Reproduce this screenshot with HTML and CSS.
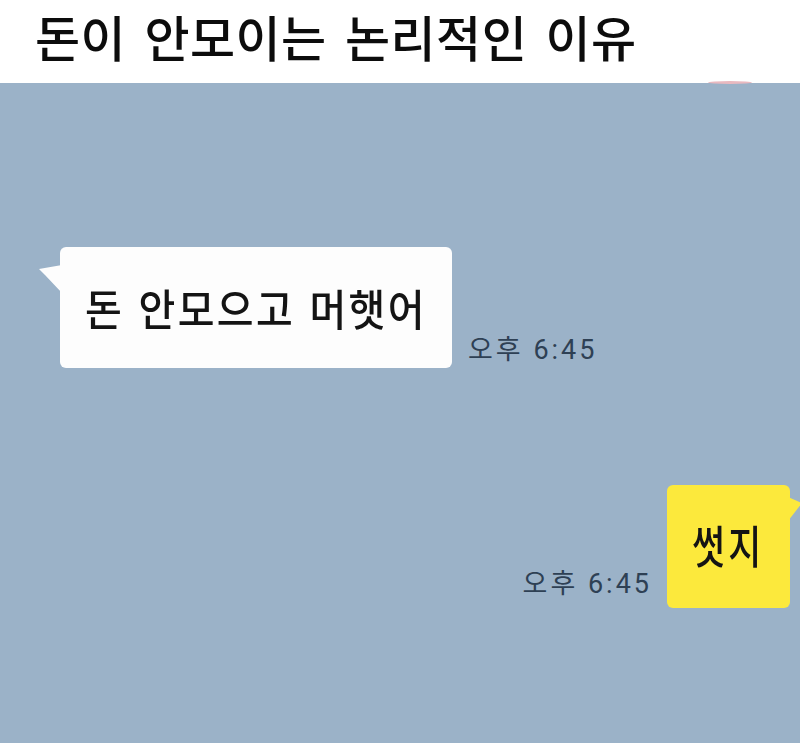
FILE: index.html
```html
<!DOCTYPE html>
<html lang="ko">
<head>
<meta charset="utf-8">
<title>돈이 안모이는 논리적인 이유</title>
<link rel="stylesheet" href="styles.css">
</head>
<body>
  <header class="title-bar">
    <h1 class="title">돈이 안모이는 논리적인 이유</h1>
    <span class="edge-mark"></span>
  </header>
  <main class="chat">
    <div class="row row-in">
      <div class="bubble bubble-in">
        <span class="squeeze msg">돈 안모으고 머햇어</span>
      </div>
      <span class="time">오후 6:45</span>
    </div>
    <div class="row row-out">
      <span class="time">오후 6:45</span>
      <div class="bubble bubble-out">
        <span class="squeeze msg-short">썻지</span>
      </div>
    </div>
  </main>
</body>
</html>
```

FILE: styles.css
```css
* { box-sizing: border-box; }

html, body {
  margin: 0;
  padding: 0;
}

body {
  width: 800px;
  height: 743px;
  overflow: hidden;
  background: #9bb2c8;
  font-family: "Noto Sans CJK KR", "Noto Sans", sans-serif;
  color: #111;
}

.title-bar {
  position: relative;
  height: 83px;
  background: #ffffff;
  padding: 0 0 0 35px;
}

.title {
  margin: 0;
  font-size: 49px;
  font-weight: 500;
  line-height: 1.45;
  letter-spacing: 0.5px;
  word-spacing: 4px;
  white-space: nowrap;
  color: #0c0c0c;
}

/* faint pink smear sitting on the header edge */
.edge-mark {
  position: absolute;
  left: 708px;
  bottom: -1px;
  width: 44px;
  height: 3px;
  border-radius: 50%;
  background: #e9b9c0;
  filter: blur(0.6px);
}

.chat {
  display: flex;
  flex-direction: column;
  padding-top: 164px;
}

.row {
  display: flex;
  align-items: flex-end;
}

.row-in {
  padding-left: 60px;
  gap: 16px;
}

.row-out {
  margin-top: 117px;
  justify-content: flex-end;
  padding-right: 10px;
  gap: 15px;
}

.bubble {
  position: relative;
  border-radius: 6px;
  display: flex;
  align-items: center;
}

.bubble-in {
  width: 392px;
  height: 121px;
  background: #fdfdfd;
  padding-left: 25px;
}

.bubble-in::before {
  content: "";
  position: absolute;
  left: -21px;
  top: 18px;
  width: 23px;
  height: 28px;
  background: #fdfdfd;
  clip-path: polygon(0 4px, 100% 0, 100% 100%, 6px 10px);
}

.bubble-out {
  width: 123px;
  height: 123px;
  background: #fce93c;
  padding-left: 25px;
}

.bubble-out::after {
  content: "";
  position: absolute;
  right: -12px;
  top: 12px;
  width: 14px;
  height: 24px;
  background: #fce93c;
  clip-path: polygon(0 0, 100% 6px, 0 100%);
}

/* message text is drawn slightly narrowed from its left edge */
.squeeze {
  display: inline-block;
  transform-origin: left center;
  white-space: nowrap;
}

.msg {
  font-size: 43px;
  font-weight: 500;
  line-height: 1;
  transform: scaleX(0.93);
  letter-spacing: 2.5px;
  word-spacing: 1px;
  color: #141414;
}

.msg-short {
  font-size: 45px;
  font-weight: 500;
  line-height: 1;
  transform: scaleX(0.8);
  letter-spacing: 4px;
  color: #141414;
  margin-top: -5px;
}

.time {
  font-family: "Roboto", "Noto Sans CJK KR", sans-serif;
  font-size: 27px;
  font-weight: 400;
  line-height: 1;
  letter-spacing: 3px;
  color: #2e4054;
  white-space: nowrap;
  padding-bottom: 4px;
}

.row-out .time {
  padding-bottom: 10px;
}
```
